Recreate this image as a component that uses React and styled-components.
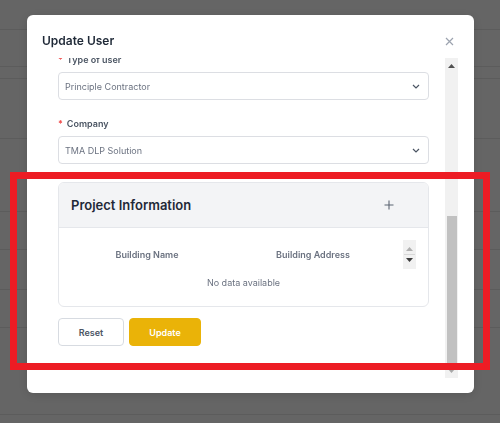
import React from "react";
import styled, { createGlobalStyle } from "styled-components";

const GlobalStyle = createGlobalStyle`
  html, body {
    margin: 0;
    padding: 0;
    background: #656565;
    font-family: "Inter", "Liberation Sans", sans-serif;
  }
  * { box-sizing: border-box; }
`;

const backdropRows = [30, 37, 12, 60, 73, 38, 40, 38, 87];

export default function App() {
  return (
    <>
      <GlobalStyle />
      <Backdrop>
        {backdropRows.map((h, i) => (
          <BackRow key={i} h={h} />
        ))}
      </Backdrop>

      <Overlay>
        <Modal>
          <Header>
            <Title>Update User</Title>
            <CloseButton aria-label="close">
              <svg width="9" height="9" viewBox="0 0 9 9">
                <path d="M1 1 L8 8 M8 1 L1 8" stroke="#9ca3af" strokeWidth="1.2" />
              </svg>
            </CloseButton>
          </Header>

          <Body>
            <Content>
              <Inner>
                <Field>
                  <Label>
                    <Req>*</Req>Type of user
                  </Label>
                  <Select>
                    <span>Principle Contractor</span>
                    <Chevron />
                  </Select>
                </Field>

                <Field>
                  <Label>
                    <Req>*</Req>Company
                  </Label>
                  <Select>
                    <span>TMA DLP Solution</span>
                    <Chevron />
                  </Select>
                </Field>

                <Card>
                  <CardHeader>
                    <CardTitle>Project Information</CardTitle>
                    <svg width="10" height="10" viewBox="0 0 10 10">
                      <path d="M5 0.5 V9.5 M0.5 5 H9.5" stroke="#5b6472" strokeWidth="1.1" />
                    </svg>
                  </CardHeader>
                  <CardBody>
                    <TableHead>
                      <Th>Building Name</Th>
                      <Th>Building Address</Th>
                      <MiniScroll>
                        <svg width="7" height="4" viewBox="0 0 7 4">
                          <polygon points="0,4 3.5,0 7,4" fill="#b0b0b0" />
                        </svg>
                        <MiniSep />
                        <svg width="7" height="4" viewBox="0 0 7 4">
                          <polygon points="0,0 7,0 3.5,4" fill="#3c3c3c" />
                        </svg>
                      </MiniScroll>
                    </TableHead>
                    <Empty>No data available</Empty>
                  </CardBody>
                </Card>

                <Actions>
                  <Button>Reset</Button>
                  <Button primary>Update</Button>
                </Actions>
              </Inner>
            </Content>

            <ScrollTrack>
              <svg width="7" height="4" viewBox="0 0 7 4">
                <polygon points="0,4 3.5,0 7,4" fill="#505050" />
              </svg>
              <ScrollThumb />
              <svg width="7" height="4" viewBox="0 0 7 4">
                <polygon points="0,0 7,0 3.5,4" fill="#a8a8a8" />
              </svg>
            </ScrollTrack>
          </Body>
        </Modal>
      </Overlay>

      <Annotation />
    </>
  );
}

function Chevron() {
  return (
    <svg width="8" height="5" viewBox="0 0 8 5">
      <path d="M1 1 L4 4 L7 1" fill="none" stroke="#4b5563" strokeWidth="1.2" />
    </svg>
  );
}

const Backdrop = styled.div`
  display: flex;
  flex-direction: column;
  width: 500px;
  height: 423px;
  overflow: hidden;
`;

const BackRow = styled.div`
  height: ${(p) => p.h}px;
  flex-shrink: 0;
  border-bottom: 1px solid #5c5c5c;
`;

const Overlay = styled.div`
  position: fixed;
  inset: 0;
  display: flex;
  align-items: flex-start;
  padding: 15px 0 0 27px;
`;

const Modal = styled.div`
  width: 447px;
  height: 378px;
  background: #ffffff;
  border-radius: 6px;
  box-shadow: 0 2px 8px rgba(0, 0, 0, 0.12);
  display: flex;
  flex-direction: column;
  padding-bottom: 15px;
`;

const Header = styled.div`
  height: 43px;
  flex-shrink: 0;
  display: flex;
  align-items: flex-start;
  justify-content: space-between;
  padding: 18px 20px 0 15px;
`;

const Title = styled.div`
  font-size: 12px;
  line-height: 16px;
  font-weight: 600;
  color: #1f2937;
`;

const CloseButton = styled.div`
  display: flex;
  align-items: center;
  height: 16px;
`;

const Body = styled.div`
  flex: 1;
  display: flex;
  gap: 16px;
  padding: 0 16px 0 31px;
  min-height: 0;
`;

const Content = styled.div`
  flex: 1;
  overflow: hidden;
`;

const Inner = styled.div`
  margin-top: -4px;
  display: flex;
  flex-direction: column;
`;

const Field = styled.div`
  display: flex;
  flex-direction: column;
  margin-bottom: 18px;
`;

const Label = styled.div`
  font-size: 9px;
  line-height: 12px;
  font-weight: 600;
  color: #4b5563;
  margin-bottom: 6px;
`;

const Req = styled.span`
  color: #ef4444;
  margin-right: 4px;
`;

const Select = styled.div`
  height: 28px;
  border: 1px solid #dcdee3;
  border-radius: 4px;
  display: flex;
  align-items: center;
  justify-content: space-between;
  padding: 0 8px 0 6px;
  font-size: 9px;
  color: #6b7280;
`;

const Card = styled.div`
  border: 1px solid #e5e7eb;
  border-radius: 6px;
  overflow: hidden;
`;

const CardHeader = styled.div`
  height: 45px;
  background: #f3f4f6;
  border-bottom: 1px solid #e5e7eb;
  display: flex;
  align-items: center;
  justify-content: space-between;
  padding: 0 34px 0 12px;
`;

const CardTitle = styled.div`
  font-size: 13px;
  font-weight: 600;
  color: #1f2937;
`;

const CardBody = styled.div`
  padding: 12px 12px 11px;
`;

const TableHead = styled.div`
  display: grid;
  grid-template-columns: 152px 180px 13px;
  height: 29px;
  align-items: center;
`;

const Th = styled.div`
  text-align: center;
  font-size: 9px;
  font-weight: 600;
  color: #6b7280;
`;

const MiniScroll = styled.div`
  height: 29px;
  width: 13px;
  background: #f1f1f1;
  display: flex;
  flex-direction: column;
  align-items: center;
  justify-content: center;
  gap: 3px;
`;

const MiniSep = styled.div`
  width: 11px;
  height: 1px;
  background: #d8d8d8;
`;

const Empty = styled.div`
  height: 26px;
  display: flex;
  align-items: center;
  justify-content: center;
  font-size: 9px;
  color: #6b7280;
`;

const Actions = styled.div`
  display: flex;
  gap: 5px;
  margin-top: 11px;
`;

const Button = styled.div`
  height: 28px;
  width: ${(p) => (p.primary ? "72px" : "66px")};
  border-radius: 4px;
  border: 1px solid ${(p) => (p.primary ? "#eab308" : "#d7dbe1")};
  background: ${(p) => (p.primary ? "#eab308" : "#ffffff")};
  color: ${(p) => (p.primary ? "#ffffff" : "#4b5563")};
  font-size: 9px;
  font-weight: 600;
  display: flex;
  align-items: center;
  justify-content: center;
`;

const ScrollTrack = styled.div`
  width: 13px;
  background: #f1f1f1;
  display: flex;
  flex-direction: column;
  align-items: center;
  padding: 6px 0 5px;
`;

const ScrollThumb = styled.div`
  width: 10px;
  margin: 148px 0 6px;
  flex: 1;
  background: #c1c1c1;
`;

const Annotation = styled.div`
  position: fixed;
  left: 10px;
  top: 172px;
  width: 480px;
  height: 198px;
  border: 7px solid #ed1c24;
  pointer-events: none;
`;
